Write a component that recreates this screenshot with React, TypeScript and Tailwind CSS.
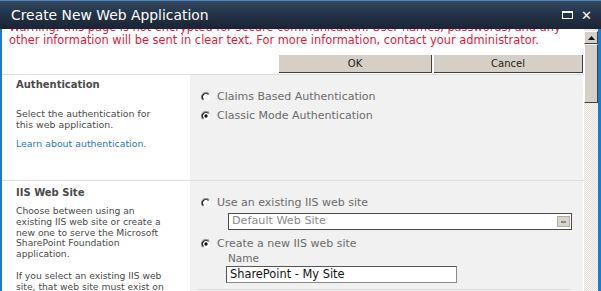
import React from "react";

const F = { fontFamily: '"DejaVu Sans", Verdana, sans-serif' };

function Radio({ checked }: { checked?: boolean }) {
  return (
    <svg width="10" height="10" viewBox="0 0 12 12" className="shrink-0">
      <circle cx="6" cy="6" r="5.2" fill="#fff" />
      <path d="M10 2 A5.5 5.5 0 0 0 2 10" stroke="#8a8a8a" strokeWidth="1.2" fill="none" />
      <path d="M9 3 A4.2 4.2 0 0 0 3 9" stroke="#1a1a1a" strokeWidth="1.3" fill="none" />
      {checked && <circle cx="6" cy="6" r="2" fill="#111" />}
    </svg>
  );
}

export default function App() {
  return (
    <div className="w-[601px] h-[291px] overflow-hidden flex flex-col bg-white" style={F}>
      {/* title bar */}
      <div className="h-[29px] shrink-0 flex items-center pl-[11px] pr-[9px] border-t border-[#4d86c0] bg-gradient-to-b from-[#33495f] via-[#233246] to-[#1a2535] relative z-10">
        <span className="text-white text-[13.9px] leading-none flex-1 pt-[1px]">Create New Web Application</span>
        <div className="w-[11px] h-[8px] border border-white border-t-[2px] mr-[8px]" />
        <span className="text-white text-[13px] font-bold leading-none">✕</span>
      </div>
      {/* body */}
      <div className="flex-1 flex min-h-0">
        <div className="w-[2px] bg-[#1f78c8] shrink-0" />
        <div className="w-[582px] shrink-0 overflow-hidden flex flex-col">
          <div className="h-[18px] overflow-hidden shrink-0 relative">
            <div className="absolute left-[7px] bottom-[1px] text-[11.4px] leading-[12.5px] text-[#e1173d]">
              <div className="whitespace-nowrap">Warning: this page is not encrypted for secure communication. User names, passwords, and any</div>
              <div className="whitespace-nowrap">other information will be sent in clear text. For more information, contact your administrator.</div>
            </div>
          </div>
          <div className="mt-[8px] flex justify-end gap-[2px] h-[19px] shrink-0">
            <div className="w-[153px] h-[18px] bg-[#d4d0c8] border-r-[1.5px] border-b-[1.5px] border-[#404040] flex items-center justify-center text-[10px] text-[#222]">OK</div>
            <div className="w-[149px] h-[18px] bg-[#d4d0c8] border-r-[1.5px] border-b-[1.5px] border-[#404040] flex items-center justify-center text-[10px] text-[#222] mr-[1px]">Cancel</div>
          </div>
          {/* section 1 */}
          <div className="grid grid-cols-[188px_393px] border-t border-[#dedede]">
            <div className="pl-[14px] pt-[3px] h-[105px] text-[#4a4a4a]">
              <div className="text-[10px] font-bold leading-[13px]">Authentication</div>
              <div className="mt-[18px] text-[9.4px] leading-[10.75px]">
                <div>Select the authentication for</div>
                <div>this web application.</div>
              </div>
              <div className="mt-[8px] text-[9.4px] leading-[10.75px] text-[#2a78bd]">Learn about authentication.</div>
            </div>
            <div className="bg-[#f1f1f1] pl-[11px] pt-[15px] text-[11px] text-[#6a6a6a]">
              <div className="flex items-center gap-[6px] h-[14px]"><Radio /><span>Claims Based Authentication</span></div>
              <div className="flex items-center gap-[6px] h-[14px] mt-[5px]"><Radio checked /><span>Classic Mode Authentication</span></div>
            </div>
          </div>
          {/* section 2 */}
          <div className="grid grid-cols-[188px_393px] border-t border-[#dedede]">
            <div className="pl-[14px] pt-[5px] text-[#4a4a4a]">
              <div className="text-[10px] font-bold leading-[13px]">IIS Web Site</div>
              <div className="mt-[7px] text-[9.2px] leading-[10.75px]">
                <div>Choose between using an</div>
                <div>existing IIS web site or create a</div>
                <div>new one to serve the Microsoft</div>
                <div>SharePoint Foundation</div>
                <div>application.</div>
                <div className="mt-[11px]">If you select an existing IIS web</div>
                <div>site, that web site must exist on</div>
              </div>
            </div>
            <div className="bg-[#f1f1f1] pl-[11px] pt-[15px] text-[11px] text-[#6a6a6a]">
              <div className="flex items-center gap-[6px] h-[14px]"><Radio /><span>Use an existing IIS web site</span></div>
              <div className="ml-[27px] mt-[3px] w-[344px] h-[17px] bg-white border-[1.5px] border-[#4a4a4a] flex items-center pl-[3px] pr-[1px]">
                <span className="flex-1 text-[11.2px] text-[#8a8a8a]">Default Web Site</span>
                <div className="w-[13px] h-[11px] bg-[#d8d5cf] border border-[#b0ada6] flex items-center justify-center">
                  <div className="w-[5px] h-[2px] bg-[#8a8a8a]" />
                </div>
              </div>
              <div className="flex items-center gap-[6px] h-[14px] mt-[7px]"><Radio checked /><span>Create a new IIS web site</span></div>
              <div className="ml-[25px] flex flex-col items-start">
                <span className="pl-[2px] text-[10.5px] leading-[14px]">Name</span>
                <div className="mt-[1px] w-[231px] h-[17px] bg-white border border-[#8a8a8a] border-t-[#555] border-l-[#555] flex items-center pl-[3px] text-[11.4px] text-[#111]">SharePoint - My Site</div>
              </div>
              <div className="mt-[6px] mr-[12px] ml-[-4px] border-t border-[#dcdcdc]" />
            </div>
          </div>
        </div>
        {/* scrollbar */}
        <div className="w-[14px] shrink-0 flex flex-col bg-[repeating-conic-gradient(#e2e0da_0%_25%,#f6f5f1_0%_50%)] bg-[length:2px_2px]">
          <div className="mt-[2px] h-[13px] bg-[#d4d0c8] border border-[#fff] border-r-[#404040] border-b-[#404040] flex items-center justify-center">
            <svg width="7" height="4" viewBox="0 0 7 4"><path d="M3.5 0 L7 4 L0 4 Z" fill="#111" /></svg>
          </div>
          <div className="h-[59px] bg-[#d4d0c8] border border-[#fff] border-r-[#404040] border-b-[#404040]" />
        </div>
        <div className="w-[3px] bg-[#1f78c8] shrink-0" />
      </div>
    </div>
  );
}
